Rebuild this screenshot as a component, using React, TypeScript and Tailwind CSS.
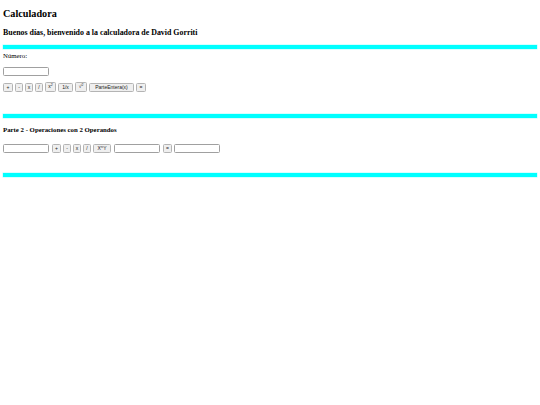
import React from "react";

const btn =
  "h-[9px] px-[3px] bg-[#efefef] border border-[#b4b4b4] rounded-[1.5px] text-[5px] leading-none text-[#222] flex items-center justify-center font-['Liberation_Sans',Arial,sans-serif]";
const inp = "h-[9px] w-[46px] border border-[#a0a0a0] rounded-[1.5px] bg-white";
const bar = "h-[4px] bg-[#00ffff] mx-[3px] shadow-[0_0_0_0.5px_#b0ffff]";

export default function App() {
  return (
    <div className="w-[540px] h-[405px] bg-white font-['Liberation_Serif','Times_New_Roman',serif] text-black flex flex-col">
      <div className="mt-[8px] h-[12px] pl-[3px] text-[10.2px] font-bold leading-[12px]">Calculadora</div>
      <div className="mt-[8px] h-[10px] pl-[3px] text-[7.9px] font-bold leading-[10px]">
        Buenos días, bienvenido a la calculadora de David Gorriti
      </div>
      <div className={`${bar} mt-[7px]`} />
      <div className="mt-[3px] h-[8px] pl-[3px] text-[6.8px] leading-[8px]">Número:</div>
      <div className="pl-[3px] mt-[7px] flex">
        <input className={inp} />
      </div>
      <div className="pl-[3px] mt-[5.5px] flex items-end gap-[2px]">
        <button className={`${btn} w-[10px]`}>+</button>
        <button className={`${btn} w-[8px]`}>-</button>
        <button className={`${btn} w-[8px]`}>x</button>
        <button className={`${btn} w-[8px]`}>/</button>
        <button className={`${btn} w-[11px] h-[10.5px]`}>
          x<sup className="text-[3.5px]">2</sup>
        </button>
        <button className={`${btn} w-[15px]`}>1/x</button>
        <button className={`${btn} w-[12px] h-[10.5px]`}>
          √<sup className="text-[3.5px]">2</sup>
        </button>
        <button className={`${btn} w-[45px]`}>ParteEntera(x)</button>
        <button className={`${btn} w-[10px]`}>=</button>
      </div>
      <div className={`${bar} mt-[22px]`} />
      <div className="mt-[8px] h-[8px] pl-[3px] text-[6.8px] font-bold leading-[8px]">
        Parte 2 - Operaciones con 2 Operandos
      </div>
      <div className="pl-[3px] mt-[10px] flex items-center gap-[2px]">
        <input className={inp} />
        <button className={`${btn} w-[9px] ml-[1px]`}>+</button>
        <button className={`${btn} w-[7px]`}>-</button>
        <button className={`${btn} w-[8px]`}>x</button>
        <button className={`${btn} w-[8px]`}>/</button>
        <button className={`${btn} w-[18px]`}>X^Y</button>
        <input className={`${inp} ml-[1px]`} />
        <button className={`${btn} w-[9px] ml-[1px]`}>=</button>
        <input className={inp} />
      </div>
      <div className={`${bar} mt-[20px]`} />
    </div>
  );
}
